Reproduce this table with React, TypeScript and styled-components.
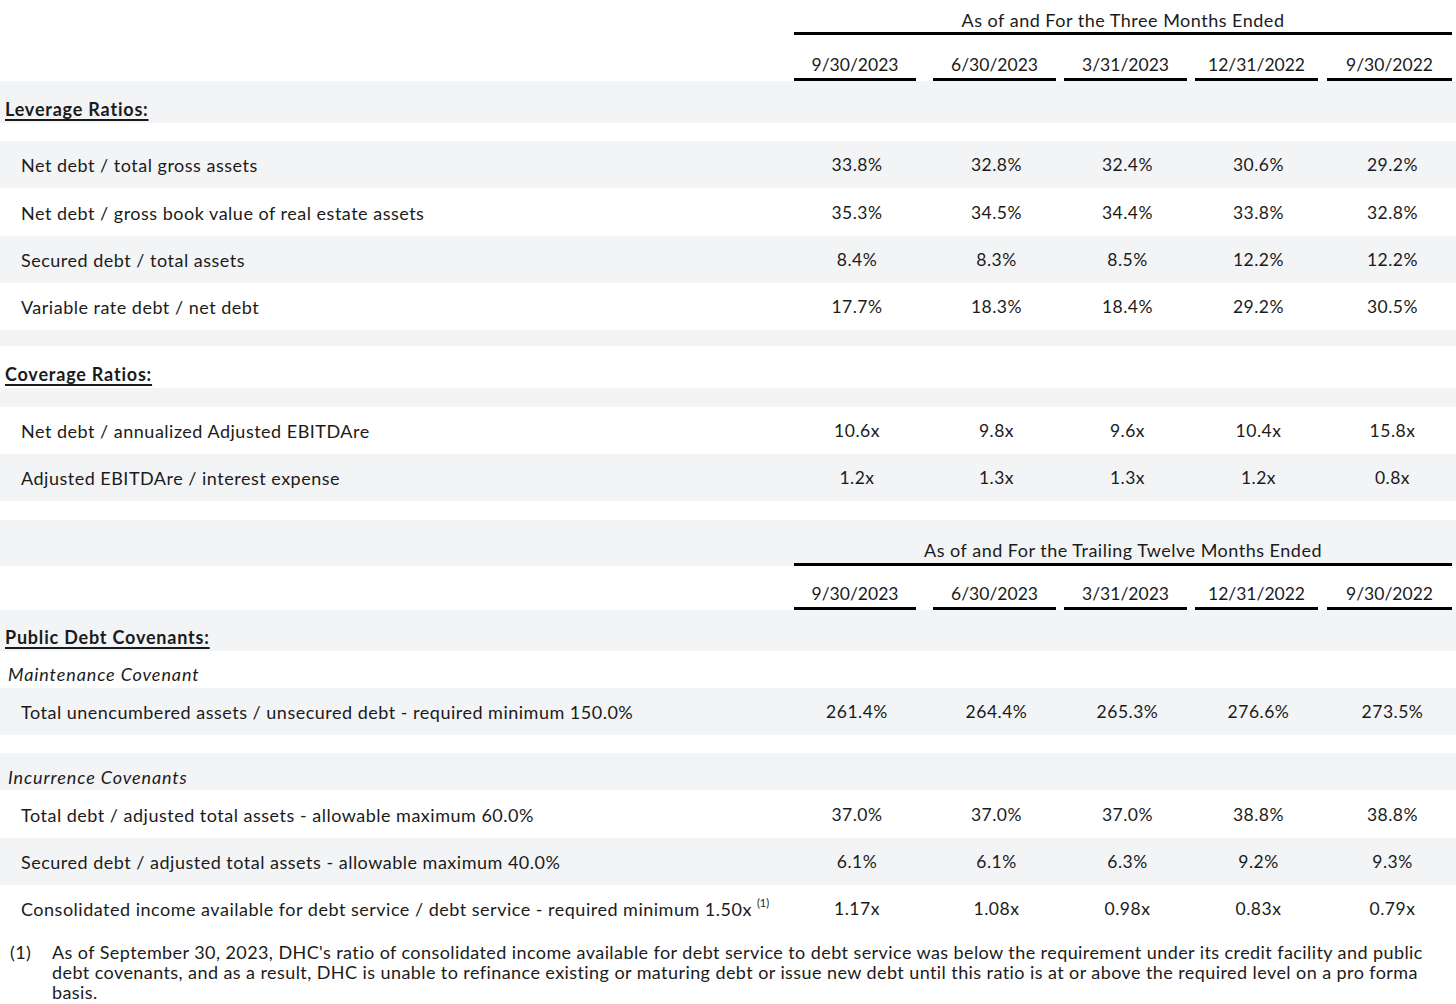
import React from "react";
import styled, { createGlobalStyle } from "styled-components";

const Global = createGlobalStyle`
  html, body { margin: 0; padding: 0; background: #ffffff; }
  body {
    font-family: Lato, "Open Sans", "Liberation Sans", sans-serif;
    color: #1b1b1b;
    font-size: 18px;
    letter-spacing: 0.5px;
  }
`;

const GRAY = "#f3f4f6";
const COLS = "786px 138px 136px 131px 131px 134px";

const Sheet = styled.div`
  width: 1456px;
  display: flex;
  flex-direction: column;
`;

const GridRow = styled.div<{ $bg?: boolean; $h: number }>`
  display: grid;
  grid-template-columns: ${COLS};
  height: ${(p) => p.$h}px;
  background: ${(p) => (p.$bg ? GRAY : "#ffffff")};
  box-sizing: border-box;
  & > :nth-child(2) { padding: 0 6px 0 10px; }
  & > :nth-child(3) { padding: 0 2px 0 11px; }
  & > :nth-child(4) { padding: 0 2px 0 6px; }
  & > :nth-child(5) { padding: 0 2px 0 6px; }
  & > :nth-child(6) { padding: 0 1px 0 8px; }
`;

const DateGridRow = styled(GridRow)`
  & > :nth-child(2) { padding: 0 8px; }
  & > :nth-child(3) { padding: 0 4px 0 9px; }
  & > :nth-child(4) { padding: 0 4px; }
  & > :nth-child(5) { padding: 0 4px; }
  & > :nth-child(6) { padding: 0 4px 0 5px; }
`;

const TitleRow = styled.div<{ $bg?: boolean; $h: number }>`
  display: grid;
  grid-template-columns: 794px 658px 4px;
  height: ${(p) => p.$h}px;
  background: ${(p) => (p.$bg ? GRAY : "#ffffff")};
`;

const TitleCell = styled.div<{ $pt: number }>`
  grid-column: 2;
  box-sizing: border-box;
  padding-top: ${(p) => p.$pt}px;
  line-height: 24px;
  text-align: center;
  border-bottom: 3px solid #000;
  white-space: nowrap;
`;

const DateCell = styled.div`
  box-sizing: border-box;
  display: flex;
  align-items: flex-end;
`;

const DateText = styled.div`
  flex: 1;
  text-align: center;
  font-size: 17.5px;
  letter-spacing: 0;
  line-height: 22px;
  padding-bottom: 2px;
  border-bottom: 3px solid #000;
  white-space: nowrap;
`;

const Band = styled.div<{ $bg?: boolean; $h: number; $pt: number; $indent: number }>`
  height: ${(p) => p.$h}px;
  box-sizing: border-box;
  padding-top: ${(p) => p.$pt}px;
  padding-left: ${(p) => p.$indent}px;
  line-height: 22px;
  background: ${(p) => (p.$bg ? GRAY : "#ffffff")};
`;

const SectionTitle = styled.span`
  font-weight: 700;
  letter-spacing: 0.8px;
  text-decoration: underline;
  text-underline-offset: 3px;
  text-decoration-thickness: 1.5px;
`;

const SubTitle = styled.span`
  font-style: italic;
  letter-spacing: 0.9px;
`;

const Spacer = styled.div<{ $bg?: boolean; $h: number }>`
  height: ${(p) => p.$h}px;
  background: ${(p) => (p.$bg ? GRAY : "#ffffff")};
`;

const Label = styled.div`
  display: flex;
  align-items: center;
  padding-left: 21px;
  padding-top: 1px;
  white-space: nowrap;
`;

const Value = styled.div`
  display: flex;
  align-items: center;
  justify-content: center;
  box-sizing: border-box;
  padding-top: 2px;
  font-size: 17.5px;
  white-space: nowrap;
`;

const Sup = styled.span`
  font-size: 11px;
  letter-spacing: 0;
  position: relative;
  top: -7px;
  margin-left: 5px;
`;

const Footnote = styled.div`
  display: grid;
  grid-template-columns: 42px 1fr;
  padding: 10px 6px 0 10px;
  line-height: 20px;
  letter-spacing: 0.42px;
`;

const DATES = ["9/30/2023", "6/30/2023", "3/31/2023", "12/31/2022", "9/30/2022"];

type Row = { label: React.ReactNode; values: string[]; bg: boolean; h?: number };

const DataRow = ({ row }: { row: Row }) => (
  <GridRow $bg={row.bg} $h={row.h ?? 47}>
    <Label>{row.label}</Label>
    {row.values.map((v, i) => (
      <Value key={i}>{v}</Value>
    ))}
  </GridRow>
);

const DatesRow = ({ h }: { h: number }) => (
  <DateGridRow $h={h}>
    <div />
    {DATES.map((d) => (
      <DateCell key={d}>
        <DateText>{d}</DateText>
      </DateCell>
    ))}
  </DateGridRow>
);

const leverage: Row[] = [
  { label: "Net debt / total gross assets", values: ["33.8%", "32.8%", "32.4%", "30.6%", "29.2%"], bg: true },
  { label: "Net debt / gross book value of real estate assets", values: ["35.3%", "34.5%", "34.4%", "33.8%", "32.8%"], bg: false, h: 48 },
  { label: "Secured debt / total assets", values: ["8.4%", "8.3%", "8.5%", "12.2%", "12.2%"], bg: true },
  { label: "Variable rate debt / net debt", values: ["17.7%", "18.3%", "18.4%", "29.2%", "30.5%"], bg: false },
];

const coverage: Row[] = [
  { label: "Net debt / annualized Adjusted EBITDAre", values: ["10.6x", "9.8x", "9.6x", "10.4x", "15.8x"], bg: false },
  { label: "Adjusted EBITDAre / interest expense", values: ["1.2x", "1.3x", "1.3x", "1.2x", "0.8x"], bg: true },
];

const maintenance: Row[] = [
  { label: "Total unencumbered assets / unsecured debt - required minimum 150.0%", values: ["261.4%", "264.4%", "265.3%", "276.6%", "273.5%"], bg: true },
];

const incurrence: Row[] = [
  { label: "Total debt / adjusted total assets - allowable maximum 60.0%", values: ["37.0%", "37.0%", "37.0%", "38.8%", "38.8%"], bg: false, h: 48 },
  { label: "Secured debt / adjusted total assets - allowable maximum 40.0%", values: ["6.1%", "6.1%", "6.3%", "9.2%", "9.3%"], bg: true },
  {
    label: (
      <>
        Consolidated income available for debt service / debt service - required minimum 1.50x
        <Sup>(1)</Sup>
      </>
    ),
    values: ["1.17x", "1.08x", "0.98x", "0.83x", "0.79x"],
    bg: false,
  },
];

export default function App() {
  return (
    <>
      <Global />
      <Sheet>
        <TitleRow $h={35}>
          <TitleCell $pt={8}>As of and For the Three Months Ended</TitleCell>
        </TitleRow>
        <DatesRow h={46} />
        <Band $bg $h={42} $pt={17} $indent={5}>
          <SectionTitle>Leverage Ratios:</SectionTitle>
        </Band>
        <Spacer $h={18} />
        {leverage.map((r, i) => (
          <DataRow key={i} row={r} />
        ))}
        <Spacer $bg $h={16} />
        <Band $h={42} $pt={17} $indent={5}>
          <SectionTitle>Coverage Ratios:</SectionTitle>
        </Band>
        <Spacer $bg $h={19} />
        {coverage.map((r, i) => (
          <DataRow key={i} row={r} />
        ))}
        <Spacer $h={19} />
        <TitleRow $bg $h={46}>
          <TitleCell $pt={18}>As of and For the Trailing Twelve Months Ended</TitleCell>
        </TitleRow>
        <DatesRow h={44} />
        <Band $bg $h={41} $pt={16} $indent={5}>
          <SectionTitle>Public Debt Covenants:</SectionTitle>
        </Band>
        <Band $h={37} $pt={12} $indent={8}>
          <SubTitle>Maintenance Covenant</SubTitle>
        </Band>
        {maintenance.map((r, i) => (
          <DataRow key={i} row={r} />
        ))}
        <Spacer $h={18} />
        <Band $bg $h={37} $pt={13} $indent={8}>
          <SubTitle>Incurrence Covenants</SubTitle>
        </Band>
        {incurrence.map((r, i) => (
          <DataRow key={i} row={r} />
        ))}
        <Footnote>
          <span>(1)</span>
          <span>
            As of September 30, 2023, DHC's ratio of consolidated income available for debt service to debt service
            was below the requirement under its credit facility and public debt covenants, and as a result, DHC is
            unable to refinance existing or maturing debt or issue new debt until this ratio is at or above the
            required level on a pro forma basis.
          </span>
        </Footnote>
      </Sheet>
    </>
  );
}
